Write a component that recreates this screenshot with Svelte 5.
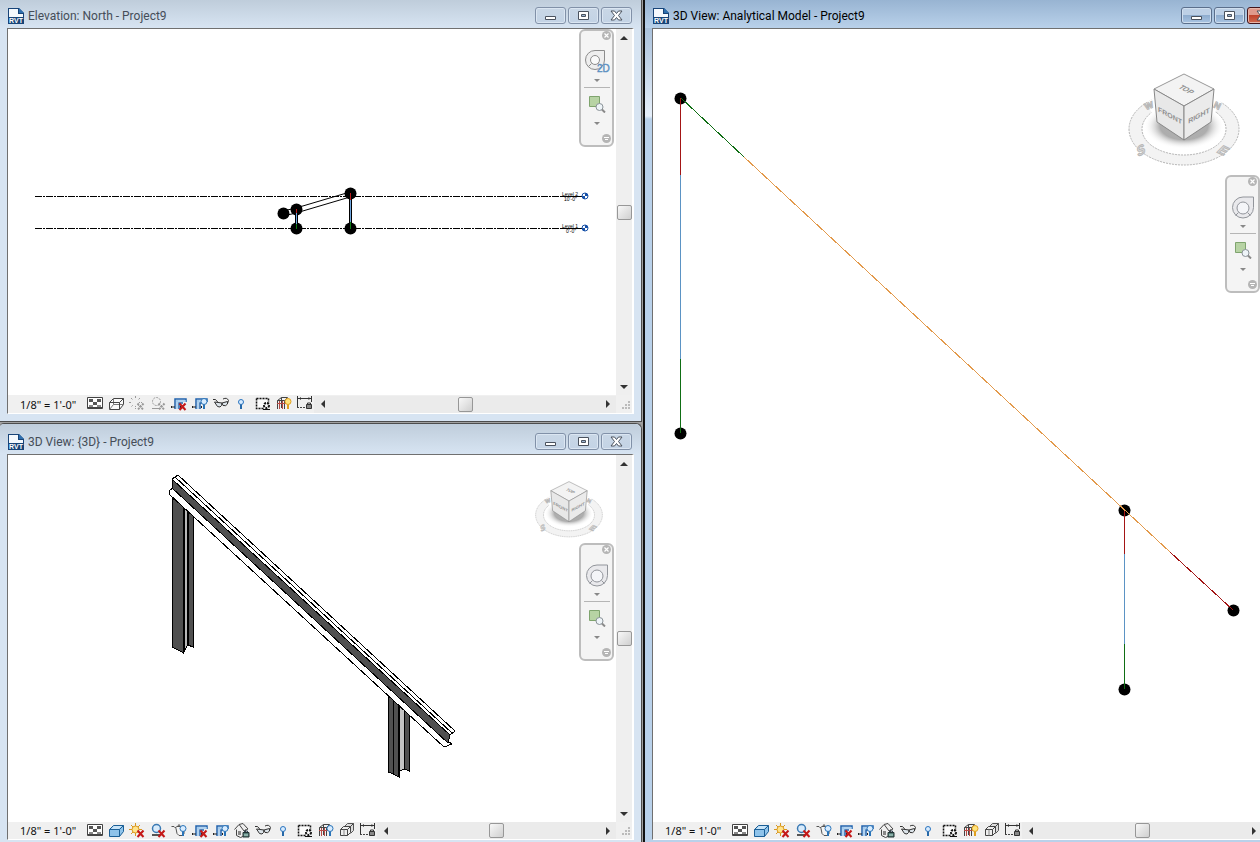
<script lang="ts">
	interface ViewWindow {
		id: string;
		title: string;
		active: boolean;
		compass: 'none' | 'small' | 'large';
		wheel2d: boolean;
		tools: string[];
	}

	const scale = `1/8" = 1'-0"`;

	const tools3d = ['detail', 'solid', 'sun', 'shadow', 'teapot', 'crop', 'cropBulb', 'house', 'glasses', 'bulb', 'props'];

	const windows: ViewWindow[] = [
		{
			id: 'elevation',
			title: 'Elevation: North - Project9',
			active: false,
			compass: 'none',
			wheel2d: true,
			tools: ['detail', 'wire', 'sunOff', 'shadowOff', 'crop', 'cropBulb', 'glasses', 'bulb', 'props', 'frameYellow', 'dimension']
		},
		{
			id: 'model',
			title: '3D View: {3D} - Project9',
			active: false,
			compass: 'small',
			wheel2d: false,
			tools: [...tools3d, 'frameBlue', 'boxes', 'dimension']
		},
		{
			id: 'analytical',
			title: '3D View: Analytical Model - Project9',
			active: true,
			compass: 'large',
			wheel2d: false,
			tools: [...tools3d, 'frameYellow', 'boxes', 'dimension']
		}
	];

	const toolNames: Record<string, string> = {
		detail: 'Detail level',
		wire: 'Visual style',
		solid: 'Visual style',
		sun: 'Sun path',
		sunOff: 'Sun path',
		shadow: 'Shadows',
		shadowOff: 'Shadows',
		teapot: 'Rendering dialog',
		crop: 'Crop view',
		cropBulb: 'Show crop region',
		house: 'Lock 3D view',
		glasses: 'Temporary hide/isolate',
		bulb: 'Reveal hidden elements',
		props: 'Temporary view properties',
		frameYellow: 'Analytical model',
		frameBlue: 'Analytical model',
		boxes: 'Displacement sets',
		dimension: 'Reveal constraints'
	};

	const elevationNodes = [[350, 193], [296, 209], [283, 213], [296, 228], [350, 228]];
	const analyticalNodes = [[680, 98], [680, 433], [1124, 510], [1124, 689], [1233, 610]];
</script>

{#snippet redCross()}
	<path d="M8.500 7.500l6 6.500M14.500 7.500L8.500 14" stroke="#c41818" stroke-width="2" />
{/snippet}

{#snippet smallBulb(color: string, edge: string)}
	<circle cx="12" cy="5.500" r="3" fill={color} stroke={edge} />
	<path d="M12 8.500v4.500" stroke={edge} stroke-width="2" />
{/snippet}

{#snippet toolIcon(name: string)}
	<svg width="16" height="16" viewBox="0 0 16 16" fill="none" aria-hidden="true">
		{#if name === 'detail'}
			<path d="M.5 1.500h15v11H.5z" fill="#fff" stroke="#444" />
			<path d="M2 3h4v3H2zM10 3h4v3h-4zM6 6h4v3H6z" fill="#555" />
			<path d="M2 9h4v2H2zM10 9h4v2h-4z" fill="#888" />
			<path d="M1 12h14" stroke="#444" stroke-width="2" />
		{:else if name === 'wire' || name === 'solid'}
			<path d="M1.500 6.500l4-4h10v6l-4 5h-10z" fill={name === 'solid' ? '#8fc3ea' : '#fafafa'} stroke={name === 'solid' ? '#1b5f96' : '#444'} stroke-linejoin="round" />
			{#if name === 'wire'}
				<path d="M5.500 2.500v6h10M5.500 8.500l-4 5" stroke="#777" />
			{:else}
				<path d="M3 6l3-3h8l-3 3z" fill="#c8e4f8" />
			{/if}
			<path d="M1.500 6.500h10v7M11.500 6.500l4-4" stroke={name === 'solid' ? '#1b5f96' : '#444'} />
		{:else if name === 'sun'}
			<path d="M6.500 0v13M0 6.500h13M2 2l9 9M11 2l-9 9" stroke="#d9981e" />
			<circle cx="6.500" cy="6.500" r="3.500" fill="#ffe48c" stroke="#dc9a20" />
			{@render redCross()}
		{:else if name === 'sunOff'}
			<path d="M6.500 0v13M0 6.500h13M2 2l9 9M11 2l-9 9" stroke="#999" stroke-dasharray="2 1" />
			<circle cx="6.500" cy="6.500" r="3.500" fill="#f0f0f0" />
			<path d="M8.500 7.500l6 6.500M14.500 7.500L8.500 14" stroke="#999" stroke-width="2" stroke-dasharray="2 1" />
		{:else if name === 'shadow'}
			<path d="M2 12h8" stroke="#555" stroke-width="2" />
			<circle cx="6.500" cy="5.500" r="4" fill="#d8ebfb" stroke="#3b7ab4" stroke-width="1.500" />
			{@render redCross()}
		{:else if name === 'shadowOff'}
			<path d="M2 12.500h7" stroke="#999" />
			<circle cx="6.500" cy="5.500" r="4" stroke="#999" stroke-dasharray="2 1" />
			<path d="M8.500 7.500l6 6.500M14.500 7.500L8.500 14" stroke="#999" stroke-width="2" stroke-dasharray="2 1" />
		{:else if name === 'teapot'}
			<path d="M.5 3.500h2.500l2 2 1 5 2 2h4l1-2V5l-2-1.500H6L4 5M6.500 3.500L8 1.500l1.500 2" stroke="#555" fill="#f4f4f4" />
			{@render smallBulb('#d8ecff', '#2a74b8')}
		{:else if name === 'crop' || name === 'cropBulb'}
			<path d="M4 13V3h11v3M8 13V7h4" stroke="#1f62ad" stroke-width="1.500" />
			<path d="M6 4v9M5 5h10" stroke="#9cc8ee" stroke-width="1.500" />
			<path d="M0 11h1.500M2.500 11h1M9 11h1" stroke="#222" stroke-width="2" />
			{#if name === 'crop'}
				{@render redCross()}
			{:else}
				{@render smallBulb('#d8ecff', '#2a74b8')}
			{/if}
		{:else if name === 'house'}
			<path d="M2.500 6.500v6l4 2 5-2v-6M.5 6.500l4.500-5 4-1 5 5.500-4 2-4.500-6" fill="#eee" stroke="#444" />
			<path d="M4 8h3v4H4z" fill="#888" />
			<path d="M10.500 9.500V8h3v1.500" stroke="#345" />
			<path d="M9 9.500h6v4.500H9z" fill="#567e79" stroke="#233" />
			<path d="M10 12h4" stroke="#bfe3da" />
		{:else if name === 'glasses'}
			<path d="M0 3.500h2.500l3.500 4M10 3q4-2 5.500 1.500l-1 3" stroke="#333" />
			<path d="M1.500 6l3 4.500q3 1.500 4-1l.5-2.500zM9 7l1 2.500q3 1 4.500-1.500V5.500z" fill="#dce4ea" stroke="#333" />
		{:else if name === 'bulb'}
			<circle cx="7" cy="6" r="2.500" fill="#d8ecff" stroke="#2a74c0" />
			<path d="M7 8.500V13" stroke="#2668a8" stroke-width="2" />
		{:else if name === 'props'}
			<path d="M1.500 2.500h12v4M1.500 2.500v10h7" stroke="#111" stroke-width="1.500" stroke-dasharray="2 1" />
			<path d="M3 4h9v7H3z" fill="#fff" opacity=".7" />
			<circle cx="11.500" cy="9.500" r="2.500" stroke="#111" stroke-width="2" stroke-dasharray="2 1" />
			<path d="M8 13.500h7" stroke="#111" />
		{:else if name === 'frameYellow' || name === 'frameBlue'}
			<path d="M1.500 13V4.500l4-3h6M5.500 12V1.500M8.500 13V4.500M1.500 4.500h7l3-3" stroke="#444" />
			<path d="M1 7.500h9M3.500 5v8M6.500 5v8" stroke="#b64a45" />
			{#if name === 'frameYellow'}
				{@render smallBulb('#ffe47c', '#e0a020')}
			{:else}
				{@render smallBulb('#d8ecff', '#2a74b8')}
			{/if}
		{:else if name === 'boxes'}
			<path d="M5.500 3.500l3-3h6v7l-3 3" fill="#ddd" stroke="#555" />
			<path d="M1.500 6.500l3-3h7v6l-3 3h-7z" fill="#eee" stroke="#444" />
			<path d="M1.500 6.500h7v6M8.500 6.500l3-3M11.500 3.500l3-3" stroke="#444" />
			<path d="M5 6.500v6" stroke="#888" />
		{:else if name === 'dimension'}
			<path d="M.5 0v12M14.500 0v6M1 2.500h13" stroke="#333" />
			<path d="M2 2.500L4 1v3zM13.500 2.500L11.500 1v3z" fill="#333" />
			<path d="M0 11.500h9" stroke="#444" stroke-dasharray="2 1" />
			<path d="M10.500 9v-2h3v2" stroke="#333" />
			<path d="M9.500 8.500h5v4h-5z" fill="#888" stroke="#333" />
		{/if}
	</svg>
{/snippet}

{#snippet fileIcon()}
	<svg width="16" height="16" viewBox="0 0 16 16" aria-hidden="true">
		<path d="M0 0h11l5 5v11H0z" fill="#184478" />
		<path d="M1 1h9v5h5v3H1z" fill="#f5f9fd" />
		<path d="M11 0l5 5h-5z" fill="#2f6fae" />
		<text x="8" y="15" text-anchor="middle" fill="#fff" class="rvt">RVT</text>
	</svg>
{/snippet}

{#snippet navBar(wheel2d: boolean)}
	<div class="nav-bar">
		<button class="nav-corner" aria-label="Close navigation bar">
			<svg width="9" height="9" viewBox="0 0 9 9"><circle cx="4.500" cy="4.500" r="4.500" fill="#b5b5b5" /><path d="M2.500 2.500l4 4M6.500 2.500l-4 4" stroke="#fff" stroke-width="1.200" /></svg>
		</button>
		<button class="nav-wheel" aria-label="Steering wheel">
			<svg width="28" height="26" viewBox="0 0 28 26" fill="none">
				{#if wheel2d}
					<path d="M12 1.500h9.500v9.500a9.500 9.500 0 1 1-9.500-9.500z" fill="#eee" stroke="#8c8c8c" />
					<circle cx="12" cy="11" r="4.500" fill="#fafafa" stroke="#8c8c8c" />
					<path d="M8.500 14.500l-3 3M15.500 14.500l2 2" stroke="#8c8c8c" />
					<text x="14" y="23" class="two-d">2D</text>
				{:else}
					<path d="M14 2h10.500v10.500a10.500 10.500 0 1 1-10.500-10.500z" fill="#e9e9ec" stroke="#92959b" />
					<circle cx="14" cy="13" r="6" fill="#f4f5f8" stroke="#92959b" />
					<path d="M9.500 17.500l-3 3M18.500 17.500l3 3" stroke="#92959b" />
				{/if}
			</svg>
		</button>
		<button class="nav-drop" aria-label="Wheel options"><span></span></button>
		<hr />
		<button class="nav-zoom" aria-label="Zoom in region">
			<svg width="18" height="17" viewBox="0 0 18 17" fill="none">
				<path d="M1.500 .5h10v10h-10z" fill="#b7d3a4" stroke="#7fa46e" />
				<circle cx="11.500" cy="11" r="3.500" fill="#eef4f8" stroke="#8a9298" />
				<path d="M14 13.500l3 3" stroke="#8a8a8a" stroke-width="2" />
			</svg>
		</button>
		<button class="nav-drop" aria-label="Zoom options"><span></span></button>
		<button class="nav-corner last" aria-label="Customize navigation bar">
			<svg width="9" height="9" viewBox="0 0 9 9"><circle cx="4.500" cy="4.500" r="4.500" fill="#b5b5b5" /><path d="M2 3.500h5M3 5.500h3" stroke="#fff" /></svg>
		</button>
	</div>
{/snippet}

{#snippet viewCube(size: string)}
	<svg class="view-cube {size}" viewBox="1128 73 112 94" aria-label="View cube">
		<defs>
			<radialGradient id="cube-shadow-{size}">
				<stop offset="0.600" stop-color="#999" stop-opacity="0.800" />
				<stop offset="1" stop-color="#fff" stop-opacity="0" />
			</radialGradient>
		</defs>
		<path
			d="M1129 129a55 36 0 1 0 110 0a55 36 0 1 0-110 0zM1142 129a42 26 0 1 0 84 0a42 26 0 1 0-84 0z"
			fill="#f3f3f3"
			fill-rule="evenodd"
			stroke="#b4b4b4"
			stroke-dasharray="2 1"
		/>
		<path d="M1147 102l37-22 38 22-8 12h-62z" fill="#fff" />
		<ellipse cx="1184" cy="126" rx="40" ry="23" fill="url(#cube-shadow-{size})" />
		<g class="compass-letters">
			<text transform="translate(1138 157) rotate(-30) skewX(-20)">S</text>
			<text transform="translate(1216 152) rotate(25) skewX(-20)">E</text>
			<text class="far" transform="translate(1146 110) rotate(-20)">W</text>
			<text class="far" transform="translate(1213 107) rotate(25)">N</text>
		</g>
		<path d="M1184 74l30 15-30 17-30-17z" fill="#f3f3f3" stroke="#999" />
		<path d="M1154 89l30 17v34l-27-18z" fill="#e8e8e8" stroke="#888" />
		<path d="M1214 89l-30 17v34l27-18z" fill="#ebebeb" stroke="#888" />
		<g class="face-labels">
			<text transform="translate(1170 118) skewY(28)" text-anchor="middle">FRONT</text>
			<text transform="translate(1199 118) skewY(-28)" text-anchor="middle">RIGHT</text>
			<text transform="translate(1184 91) rotate(28) skewX(-30)" text-anchor="middle">TOP</text>
		</g>
	</svg>
{/snippet}

{#snippet elevationDrawing()}
	<svg class="drawing" viewBox="8 29 608 366" preserveAspectRatio="xMinYMin meet" aria-label="North elevation">
		<g stroke="#000" shape-rendering="crispEdges">
			<path d="M35 196.500h528M35 228.500h528" stroke-dasharray="7 1 2 1" />
			<path d="M562 196.500h20M562 228.500h20" />
		</g>
		<g class="level-label">
			<text x="562" y="196">Level 2</text>
			<text x="564" y="201">10'-0"</text>
			<text x="562" y="228">Level 1</text>
			<text x="566" y="233">0'-0"</text>
		</g>
		{#each [196, 228] as y}
			<circle cx="585" cy={y} r="3" fill="#fff" stroke="#1650a8" />
			<path d="M585 {y}v-3a3 3 0 0 1 3 3zM585 {y}v3a3 3 0 0 1-3-3z" fill="#1650a8" />
		{/each}
		<path d="M283 211l13-3 54-16M283 216l13-3 54-16" fill="none" stroke="#000" />
		{#each elevationNodes as [x, y]}
			<circle cx={x + 0.5} cy={y + 0.5} r="6" />
		{/each}
		<g shape-rendering="crispEdges">
			<path d="M296.500 209v20M350.500 193v36" stroke="#000" stroke-width="3" />
			<path d="M296.500 213v11M350.500 200v22" stroke="#6fa6df" />
			<path d="M296.500 209v4M350.500 193v7" stroke="#b81919" />
			<path d="M296.500 224v5M350.500 222v7" stroke="#0b7a12" />
		</g>
	</svg>
{/snippet}

{#snippet modelDrawing()}
	<svg class="drawing" viewBox="8 455 608 367" preserveAspectRatio="xMinYMin meet" aria-label="Steel frame">
		<g stroke="#000" shape-rendering="crispEdges">
			<path d="M187.500 500v145l6 2V500z" fill="#505050" />
			<path d="M184 500v152l3.500-7V500z" fill="#b8b8b8" />
			<path d="M172.500 499v148l11 6V503z" fill="#505050" />
			<path d="M188.500 507v138" />
			<path d="M404.500 705v64l5 2v-64z" fill="#505050" />
			<path d="M399.500 700v71l5-2v-66z" fill="#c4c4c4" />
			<path d="M388.500 697v75l11 5v-75z" fill="#505050" />
			<path d="M393.500 699v75M398.500 701v75" />
		</g>
		<g stroke="#000" stroke-linejoin="round" shape-rendering="crispEdges">
			<path d="M169 491l4-3 276 254 3 2-8 3L169 494z" fill="#fff" />
			<path d="M173 480l-1 8 276 255 2-8z" fill="#505050" />
			<path d="M172 479l6-4 277 256-5 4L173 480z" fill="#fff" />
			<path d="M175 477l277 256" />
		</g>
	</svg>
{/snippet}

{#snippet analyticalDrawing()}
	<svg class="drawing" viewBox="653 29 609 793" preserveAspectRatio="xMinYMin meet" aria-label="Analytical model">
		{#each analyticalNodes as [x, y]}
			<circle cx={x + 0.5} cy={y + 0.5} r="6" />
		{/each}
		<g fill="none" shape-rendering="crispEdges">
			<path d="M680.500 98v77M1124.500 510v44M1170 552l63 58" stroke="#a31515" />
			<path d="M680.500 175v184M1124.500 554v90" stroke="#5b93c4" />
			<path d="M680.500 359v74M1124.500 644v45M681 98l63 59" stroke="#0f6e14" />
			<path d="M744 157l426 395" stroke="#e39a4c" />
		</g>
	</svg>
{/snippet}

<main class="workspace">
	{#each windows as win (win.id)}
		<section class="window {win.id}" class:active={win.active} aria-label={win.title}>
			<header>
				{@render fileIcon()}
				<h2>{win.title}</h2>
				<div class="window-buttons">
					<button aria-label="Minimize">
						<svg width="13" height="11" viewBox="0 0 13 11"><path d="M1.500 6.500h10v3h-10z" fill="#fff" stroke="#4a525e" /></svg>
					</button>
					<button aria-label="Maximize">
						<svg width="13" height="11" viewBox="0 0 13 11"><path d="M1.500 1.500h10v8h-10z" fill="#fff" stroke="#4a525e" /><path d="M4.500 4.500h4v2h-4z" fill="#9db6d2" stroke="#4a525e" /></svg>
					</button>
					<button class="close" aria-label="Close">
						<svg width="13" height="11" viewBox="0 0 13 11"><path d="M1 1h3.500l2 2.500 2-2.500H12L8.500 5.500 12 10H8.500l-2-2.500-2 2.500H1l3.500-4.500z" fill="#fff" stroke="#4a525e" /></svg>
					</button>
				</div>
			</header>
			<div class="client">
				<div class="view-row">
					<div class="canvas">
						{#if win.id === 'elevation'}
							{@render elevationDrawing()}
						{:else if win.id === 'model'}
							{@render modelDrawing()}
						{:else}
							{@render analyticalDrawing()}
						{/if}
						{#if win.compass !== 'none'}
							{@render viewCube(win.compass)}
						{/if}
						{@render navBar(win.wheel2d)}
					</div>
					<div class="scroll vertical">
						<button aria-label="Scroll up"><span class="tri up"></span></button>
						<div class="thumb"></div>
						<button aria-label="Scroll down"><span class="tri down"></span></button>
					</div>
				</div>
				<footer>
					<button class="scale">{scale}</button>
					<div class="tools">
						{#each win.tools as tool}
							<button aria-label={toolNames[tool]}>{@render toolIcon(tool)}</button>
						{/each}
					</div>
					<div class="scroll horizontal">
						<button aria-label="Scroll left"><span class="tri left"></span></button>
						<div class="thumb"></div>
						<button aria-label="Scroll right"><span class="tri right"></span></button>
					</div>
					<svg class="grip" width="16" height="17" viewBox="0 0 16 17" fill="#bbb" aria-hidden="true">
						<path d="M12 5h2v2h-2zM9 8h2v2H9zM12 8h2v2h-2zM6 11h2v2H6zM9 11h2v2H9zM12 11h2v2h-2z" />
					</svg>
				</footer>
			</div>
		</section>
	{/each}
</main>

<style>
	:global(body) {
		margin: 0;
	}

	.workspace {
		display: grid;
		grid-template-columns: 642fr 617fr;
		grid-template-rows: 422fr 419fr;
		gap: 1px;
		height: 100vh;
		min-height: 480px;
		overflow: hidden;
		background: #a0a0a0;
		font-family: Roboto, 'Open Sans', sans-serif;
	}

	button {
		display: flex;
		align-items: center;
		justify-content: center;
		padding: 0;
		border: 0;
		background: none;
		font: inherit;
		color: inherit;
	}

	.window {
		display: flex;
		flex-direction: column;
		box-sizing: border-box;
		min-width: 0;
		min-height: 0;
		padding: 0 7px;
		background: #d7e4f2;
		border-right: 1px solid #4d4d4d;
	}

	.elevation {
		padding-bottom: 7px;
		border-bottom: 1px solid #4d4d4d;
	}

	.model {
		grid-row: 2;
		padding-bottom: 2px;
		border-top: 1px solid #4d4d4d;
		border-top-right-radius: 6px;
		border-top-left-radius: 4px;
	}

	/* the active window runs past the right edge of the workspace */
	.analytical {
		grid-column: 2;
		grid-row: 1 / span 2;
		width: calc(100% + 28px);
		padding-bottom: 2px;
		background: linear-gradient(#98b4d2, #e6effa 116px, #b9d1ea 119px);
		border-left: 2px solid #111;
	}

	header {
		display: flex;
		align-items: center;
		flex: none;
		height: 28px;
		margin: 0 -7px;
		padding: 3px 9px 0 8px;
		box-sizing: border-box;
		background: linear-gradient(#bfcddb, #d7e4f2);
	}

	.model header {
		height: 30px;
		padding-top: 5px;
		border-radius: 4px 6px 0 0;
	}

	.active header {
		background: linear-gradient(#98b4d2, #b9d1ea);
	}

	h2 {
		flex: 1;
		margin: 0 0 0 4px;
		font-size: 12px;
		font-weight: 400;
		line-height: 16px;
		color: #454d58;
		white-space: nowrap;
	}

	.active h2 {
		color: #000;
	}

	.rvt {
		font: 700 7px 'Liberation Sans', sans-serif;
	}

	.window-buttons {
		display: flex;
		gap: 2px;
	}

	.window-buttons button {
		width: 31px;
		height: 17px;
		box-sizing: border-box;
		border: 1px solid #8191a8;
		border-radius: 3px;
		background: linear-gradient(#c9d7e6, #c3d3e5);
		box-shadow: inset 0 0 0 1px #dbe6f2;
	}

	.active .window-buttons button {
		border-color: #5b6f8c;
		background: linear-gradient(#bdd0e6 45%, #8fadcf 50%, #a9c4e2);
		box-shadow: inset 0 0 0 1px #d0dfef;
	}

	.active .window-buttons .close {
		border-color: #43141a;
		background: linear-gradient(#e09a8c 45%, #c0432c 50%, #cf6a4f);
		box-shadow: inset 0 0 0 1px #e8b5a8;
	}

	.client {
		display: flex;
		flex-direction: column;
		flex: 1;
		min-height: 0;
		border-top: 1px solid #707070;
		border-left: 1px solid #707070;
		border-right: 2px solid #fff;
		border-bottom: 1px solid #fff;
		background: #fff;
	}

	.view-row {
		display: flex;
		flex: 1;
		min-height: 0;
	}

	.canvas {
		position: relative;
		flex: 1;
		min-width: 0;
		overflow: hidden;
		background: #fff;
	}

	.drawing {
		display: block;
		width: 100%;
		height: 100%;
	}

	.level-label {
		font: 5px 'Liberation Sans', sans-serif;
	}

	.view-cube {
		position: absolute;
	}

	.view-cube.large {
		top: 44px;
		right: 22px;
		width: 112px;
	}

	.view-cube.small {
		top: 26px;
		right: 13px;
		width: 68px;
	}

	.face-labels {
		font: 700 7px 'Liberation Sans', sans-serif;
		fill: #909090;
	}

	.compass-letters {
		font: 700 13px 'Liberation Sans', sans-serif;
		fill: #e4e4e4;
		stroke: #b8b8b8;
	}

	.far {
		font-size: 9px;
	}

	.nav-bar {
		position: absolute;
		top: 0;
		right: 2px;
		display: flex;
		flex-direction: column;
		align-items: center;
		box-sizing: border-box;
		width: 35px;
		height: 118px;
		border: 2px solid #bdbdbd;
		border-radius: 6px;
		background: #f4f4f4;
	}

	.model .nav-bar {
		top: 88px;
	}

	.analytical .nav-bar {
		top: 146px;
	}

	.nav-corner {
		align-self: flex-end;
		width: 9px;
		height: 9px;
		margin-right: 1px;
	}

	.nav-corner.last {
		margin-top: 5px;
	}

	.nav-wheel {
		margin-top: 9px;
	}

	.nav-drop {
		width: 20px;
		height: 11px;
	}

	.nav-drop span {
		border: 3px solid transparent;
		border-top-color: #888;
		border-bottom: 0;
	}

	hr {
		width: 26px;
		margin: 1px 0 8px;
		border: 0;
		border-top: 1px solid #b5b5b5;
	}

	.nav-zoom {
		margin-bottom: 5px;
	}

	.two-d {
		font: 10px 'Liberation Sans', sans-serif;
		fill: #5a8fc0;
		stroke: #5a8fc0;
		stroke-width: 0.4px;
	}

	.scroll {
		display: flex;
		align-items: center;
		justify-content: space-between;
		background: #efefef;
	}

	.vertical {
		flex-direction: column;
		width: 16px;
	}

	.horizontal {
		flex: 1;
		margin-left: 1px;
		background: #ebebeb;
	}

	.scroll button {
		width: 17px;
		height: 17px;
	}

	.thumb {
		box-sizing: border-box;
		width: 15px;
		height: 15px;
		border: 1px solid #979797;
		border-radius: 2px;
		background: linear-gradient(135deg, #f8f8f8, #cfcfcf);
	}

	.tri {
		border: 4px solid transparent;
	}

	.tri.up {
		border-bottom-color: #333;
		border-top: 0;
	}

	.tri.down {
		border-top-color: #333;
		border-bottom: 0;
	}

	.tri.left {
		border-right-color: #333;
		border-left: 0;
	}

	.tri.right {
		border-left-color: #333;
		border-right: 0;
	}

	footer {
		display: flex;
		align-items: center;
		flex: none;
		height: 17px;
		background: #f0f0f0;
	}

	.elevation footer {
		height: 18px;
	}

	.scale {
		flex: none;
		width: 67px;
		margin-right: 12px;
		padding-left: 12px;
		box-sizing: border-box;
		justify-content: flex-start;
		font: 11px 'Noto Sans', 'DejaVu Sans', sans-serif;
		line-height: 15px;
		color: #111;
		white-space: nowrap;
	}

	.tools {
		display: flex;
		flex: none;
		gap: 5px;
	}

	.grip {
		flex: none;
	}
</style>
